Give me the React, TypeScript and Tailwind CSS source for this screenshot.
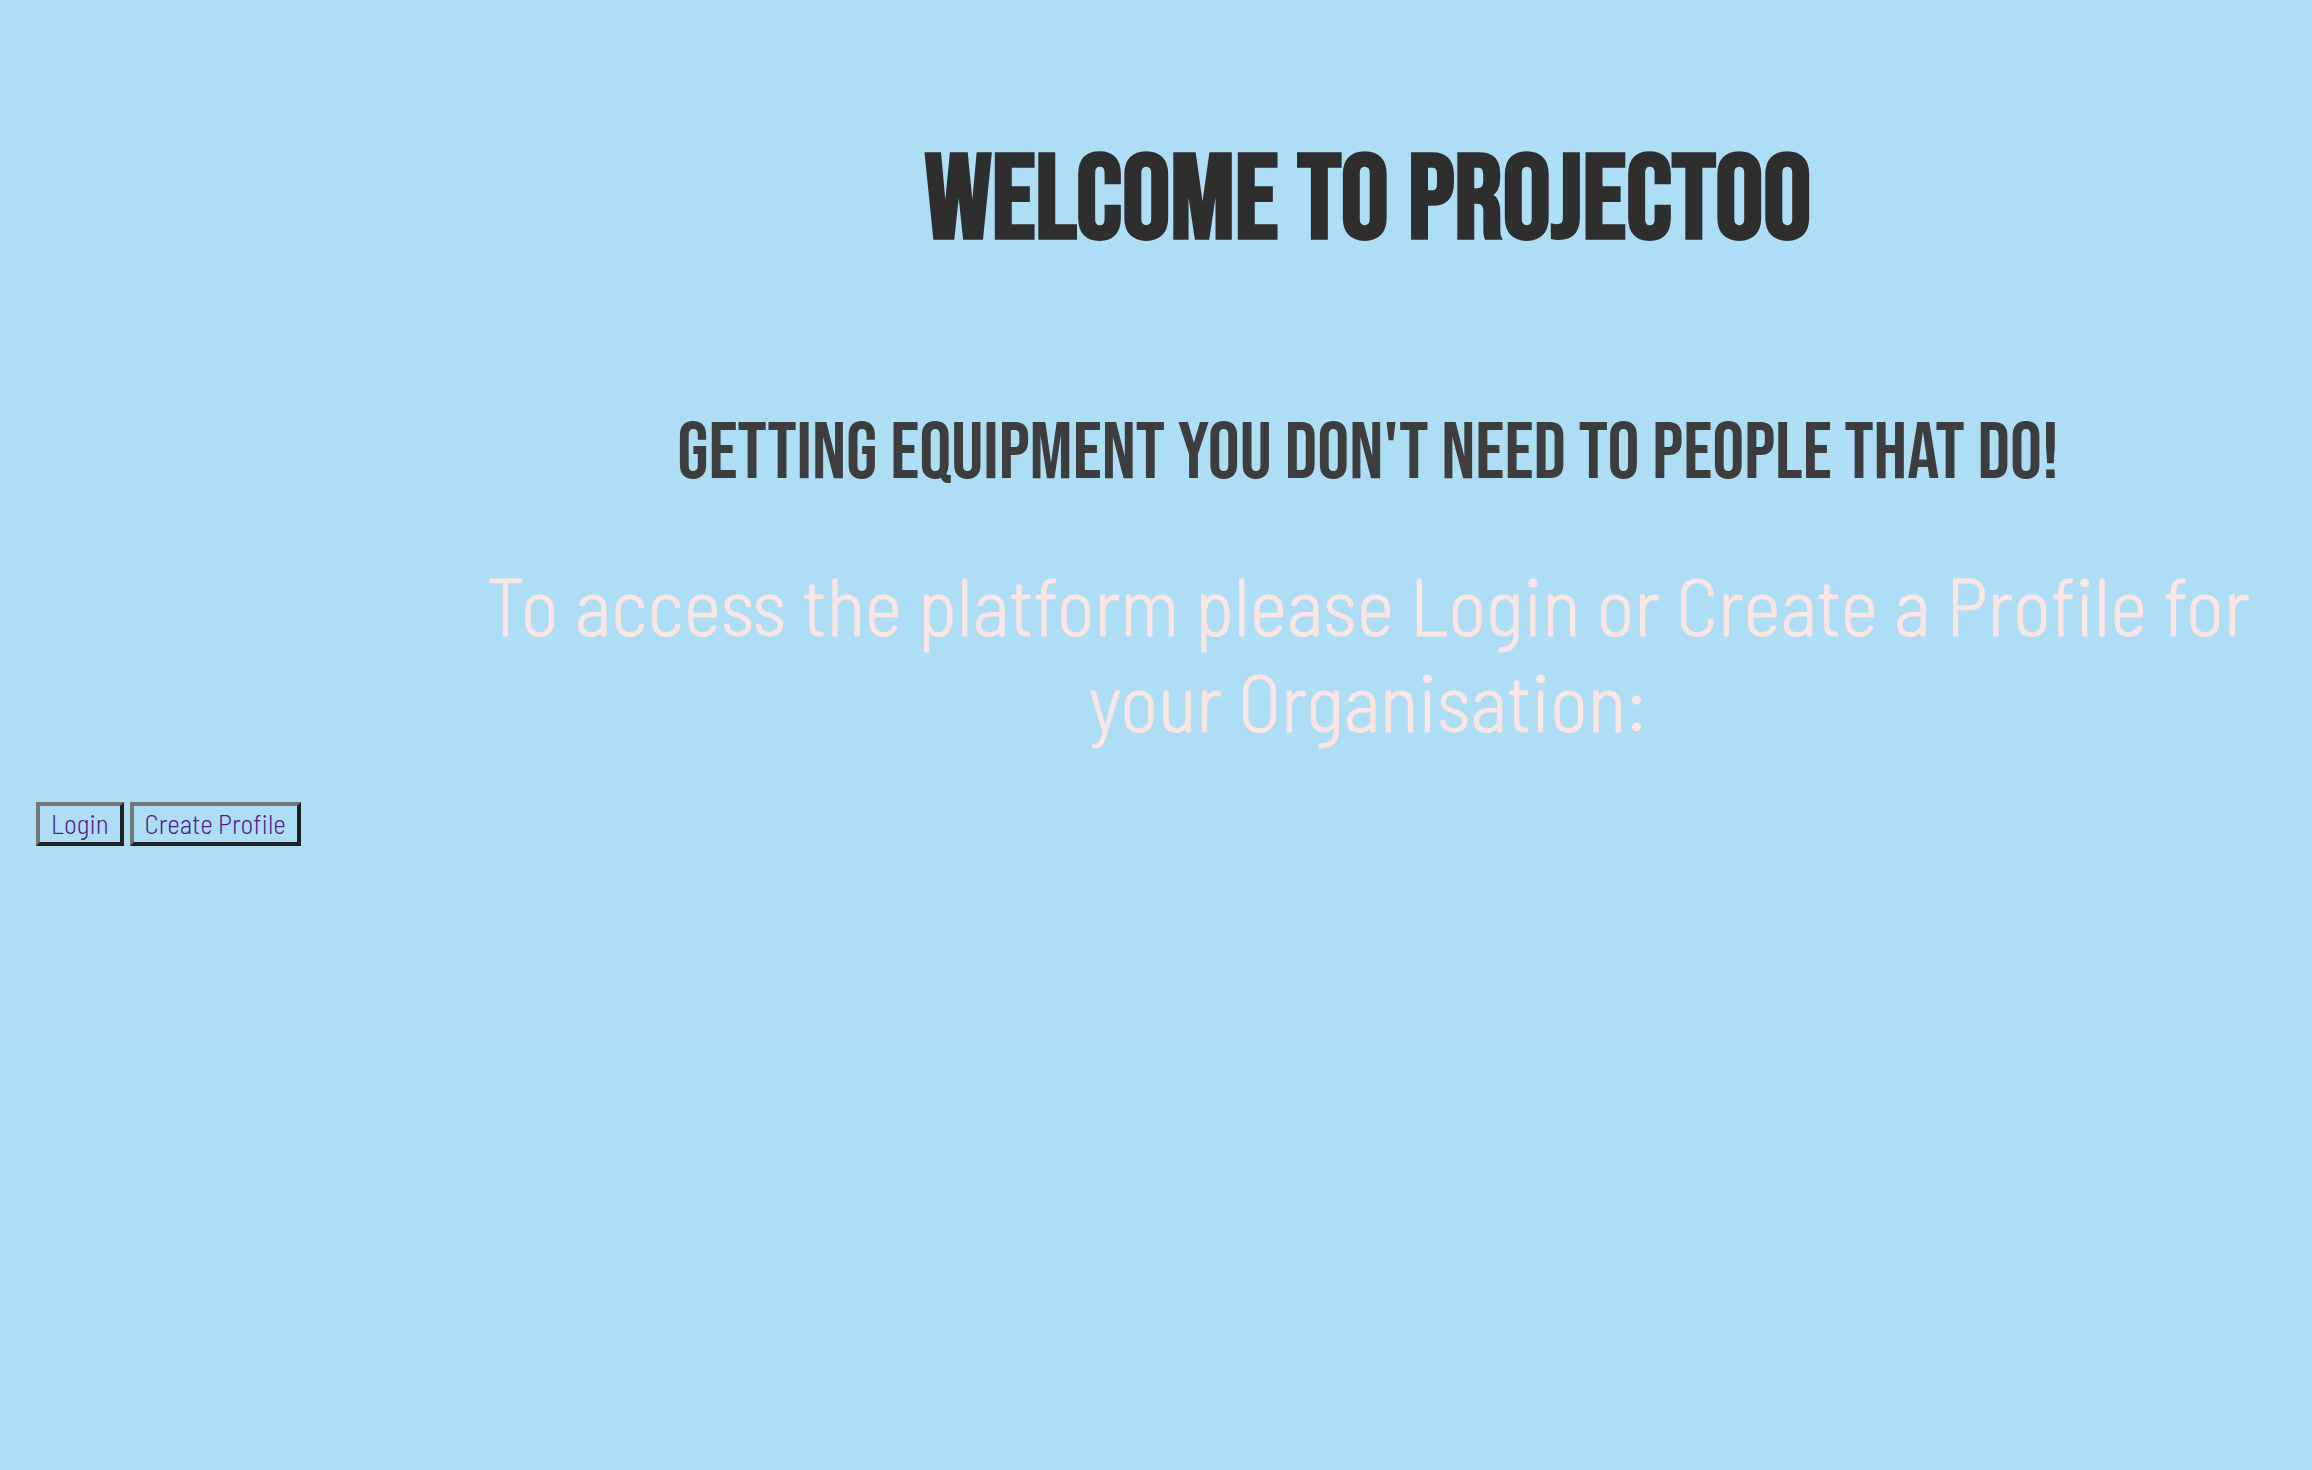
const buttonClass =
  "border-4 border-t-[#767676] border-l-[#767676] border-b-[#212121] border-r-[#212121] px-[11px] pt-px pb-[3px] font-['Barlow_Semi_Condensed',sans-serif] text-[27px] leading-8 font-light text-[#551a8b]";

export default function App() {
  return (
    <main className="min-h-screen bg-linear-to-b from-[#addef5] from-70% to-[#acdef5] to-75% px-9 pt-[130px]">
      <header className="ml-[424px] text-center">
        <h1 className="font-['Bebas_Neue',sans-serif] text-[120px] leading-[144px] font-bold text-[#2e2e2e]">
          Welcome to Projectoo
        </h1>
        <h2 className="mt-[132px] font-['Bebas_Neue',sans-serif] text-[80px] leading-[96px] font-normal text-[#3d3d3d]">
          Getting equipment you don't need to people that do!
        </h2>
        <p className="mt-[54px] font-['Barlow_Semi_Condensed',sans-serif] text-[80px] leading-[96px] font-light text-[#fbe5e3] [-webkit-text-stroke:1px_#fbe5e3]">
          To access the platform please Login or Create a Profile for your Organisation:
        </p>
      </header>
      <nav className="mt-[54px] flex gap-[6px]">
        <button type="button" className={buttonClass}>
          Login
        </button>
        <button type="button" className={buttonClass}>
          Create Profile
        </button>
      </nav>
    </main>
  );
}
